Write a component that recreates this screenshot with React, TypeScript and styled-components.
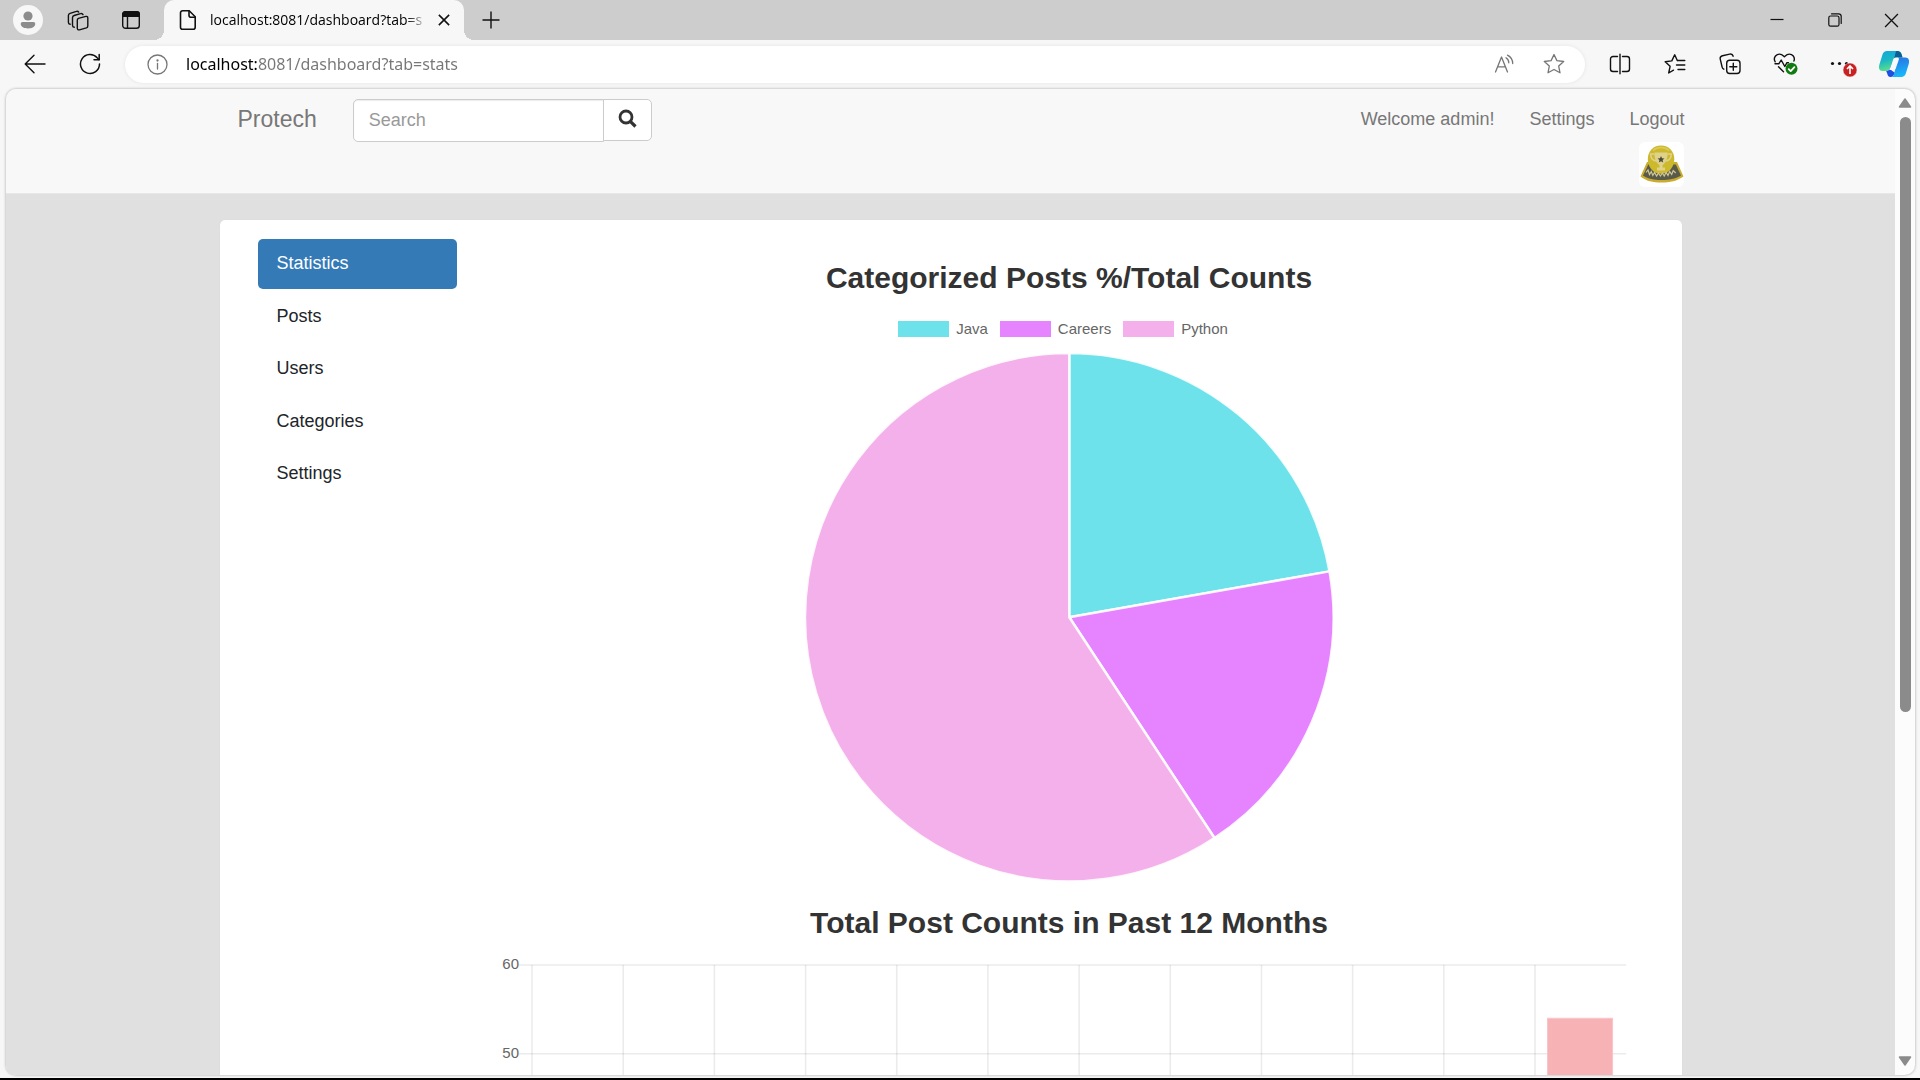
import React from "react";
import styled, { createGlobalStyle } from "styled-components";

const uiFont = `"Segoe UI", "Open Sans", "Noto Sans", sans-serif`;
const pageFont = `"Helvetica Neue", "Liberation Sans", Arial, sans-serif`;

const Global = createGlobalStyle`
  *, *::before, *::after { box-sizing: border-box; }
  body { margin: 0; background: #f7f7f7; }
  button { border: 0; background: none; padding: 0; font: inherit; color: inherit; cursor: pointer; }
  svg { display: block; }
`;

/* ---------- browser chrome ---------- */

const Window = styled.div`
  display: flex;
  flex-direction: column;
  height: 100vh;
  overflow: hidden;
  background: #f7f7f7;
  border-bottom: 2px solid #000;
  font-family: ${uiFont};
`;

const TabStrip = styled.header`
  display: flex;
  align-items: stretch;
  flex: none;
  height: 40px;
  padding-left: 5px;
  background: #cdcdcd;
  color: #111;
`;

const StripButton = styled.button<{ $w: number }>`
  display: flex;
  flex: none;
  align-items: center;
  justify-content: center;
  width: ${(p) => p.$w}px;
`;

const Tab = styled.div`
  position: relative;
  display: flex;
  align-items: center;
  width: 300px;
  margin-left: 7px;
  padding: 0 12px 0 14px;
  background: #f7f7f7;
  border-radius: 10px 10px 0 0;
  &::before,
  &::after {
    content: "";
    position: absolute;
    bottom: 0;
    width: 10px;
    height: 10px;
  }
  &::before {
    right: 100%;
    background: radial-gradient(circle at 0 0, transparent 10px, #f7f7f7 10px);
  }
  &::after {
    left: 100%;
    background: radial-gradient(circle at 100% 0, transparent 10px, #f7f7f7 10px);
  }
`;

const TabTitle = styled.span`
  flex: 1;
  min-width: 0;
  margin: 0 8px 0 12px;
  white-space: nowrap;
  font-size: 14px;
  line-height: 20px;
  color: #000;
  mask-image: linear-gradient(90deg, #000 90%, transparent);
`;

const WindowControls = styled.div`
  display: flex;
  margin-left: auto;
`;

const Toolbar = styled.div`
  display: flex;
  align-items: center;
  flex: none;
  height: 48px;
  padding-left: 7px;
  color: #111;
`;

const ToolButton = styled.button<{ $w?: number }>`
  display: flex;
  flex: none;
  align-items: center;
  justify-content: center;
  width: ${(p) => p.$w ?? 55}px;
  height: 36px;
`;

const AddressBar = styled.form`
  display: flex;
  align-items: center;
  flex: 1;
  height: 37px;
  margin: 0 7px 0 8px;
  padding: 0 6px 0 22px;
  background: #fff;
  border-radius: 19px;
  box-shadow: 0 0 4px rgba(0, 0, 0, 0.08);
  color: #767676;
`;

const AddressInput = styled.input`
  flex: 1;
  min-width: 0;
  margin-left: 18px;
  padding: 0;
  border: 0;
  outline: 0;
  font-family: "Segoe UI", "Noto Sans", "Open Sans", sans-serif;
  font-size: 16px;
  line-height: 24px;
  color: transparent;
  background: linear-gradient(90deg, #000 72px, #767676 72px);
  background-clip: text;
  -webkit-background-clip: text;
`;

/* ---------- page frame ---------- */

const Frame = styled.div`
  display: flex;
  flex: 1;
  min-height: 0;
  margin: 1px 5px 3px 6px;
  overflow: hidden;
  border-radius: 10px;
  background: #fcfcfc;
  box-shadow: 0 0 3px rgba(0, 0, 0, 0.35);
`;

const Page = styled.div`
  flex: 1;
  min-width: 0;
  overflow: hidden;
  background: #e0e0e0;
  font-family: ${pageFont};
  font-size: 18px;
  line-height: 25px;
  color: #333;
`;

const ScrollTrack = styled.div`
  display: flex;
  flex-direction: column;
  align-items: center;
  flex: none;
  width: 20px;
  padding: 9px 0;
`;

const ScrollSpace = styled.div`
  flex: 1;
  width: 11px;
  margin: 9px 0;
`;

const ScrollThumb = styled.div`
  height: 64%;
  border-radius: 6px;
  background: #8b8b8b;
`;

const Container = styled.div`
  display: flex;
  width: 100%;
  max-width: 1462px;
  margin: 0 auto;
`;

const Navbar = styled.nav`
  height: 105px;
  background: #f8f8f8;
  border-bottom: 1px solid #e7e7e7;
`;

const Brand = styled.a`
  padding: 18px 36px 0 18px;
  font-size: 23px;
  line-height: 25px;
  color: #777;
  text-decoration: none;
`;

const SearchForm = styled.form`
  display: flex;
  align-items: flex-start;
  padding-top: 10px;
`;

const SearchInput = styled.input`
  width: 251px;
  height: 43px;
  padding: 0 15px;
  border: 1px solid #ccc;
  border-radius: 5px 0 0 5px;
  background: #fff;
  box-shadow: inset 0 1px 1px rgba(0, 0, 0, 0.075);
  font-family: ${pageFont};
  font-size: 18px;
  color: #555;
  &::placeholder {
    color: #999;
  }
`;

const SearchButton = styled.button`
  display: flex;
  justify-content: center;
  width: 49px;
  height: 42px;
  margin-left: -1px;
  padding-top: 9px;
  border: 1px solid #ccc;
  border-radius: 0 5px 5px 0;
  background: #fff;
`;

const NavLinks = styled.ul`
  display: flex;
  gap: 35px;
  margin: 0 -3px 0 auto;
  padding: 18px 0 0;
  list-style: none;
`;

const NavLink = styled.a`
  display: block;
  color: #777;
  text-decoration: none;
`;

const Avatar = styled.a`
  display: block;
  width: 45px;
  height: 45px;
  margin: 10px 0 0 10px;
  overflow: hidden;
  border-radius: 6px;
  background: #fff;
`;

const Card = styled.div`
  display: flex;
  flex: 1;
  min-width: 0;
  margin-top: 26px;
  padding: 19px 38px;
  border-radius: 5px 5px 0 0;
  background: #fff;
  box-shadow: 0 0 1px rgba(0, 0, 0, 0.1);
`;

const SideNav = styled.nav`
  display: flex;
  flex: none;
  flex-direction: column;
  justify-content: space-between;
  width: 199px;
  height: 260px;
`;

const SideLink = styled.a<{ $active?: boolean }>`
  padding: 12px 19px 13px;
  border-radius: 5px;
  background: ${(p) => (p.$active ? "#337ab7" : "transparent")};
  color: ${(p) => (p.$active ? "#fff" : "#212529")};
  text-decoration: none;
`;

const Stats = styled.main`
  flex: 1;
  min-width: 0;
  margin-left: 38px;
`;

const ChartTitle = styled.h3`
  margin: 22px 0 14px;
  font-size: 30px;
  line-height: 33px;
  font-weight: 700;
  text-align: center;
`;

const Legend = styled.ul`
  display: flex;
  justify-content: center;
  margin: 0;
  padding: 12px 0 15px;
  list-style: none;
`;

const LegendItem = styled.li`
  display: flex;
  align-items: center;
  gap: 7px;
  margin-right: 12px;
  font-size: 15px;
  line-height: 18px;
  color: #666;
`;

const Swatch = styled.span<{ $color: string }>`
  width: 51px;
  height: 16px;
  background: ${(p) => p.$color};
`;

const PieSvg = styled.svg`
  width: 46%;
  height: auto;
  margin: 0 auto 24px;
`;

const BarSvg = styled.svg`
  width: 100%;
  height: auto;
  font-family: ${pageFont};
  font-size: 15px;
`;

/* ---------- data ---------- */

const categories = [
  { name: "Java", posts: 12, color: "#6ee2ea" },
  { name: "Careers", posts: 10, color: "#e683ff" },
  { name: "Python", posts: 32, color: "#f4b0ea" },
];

const monthly = [0, 0, 0, 0, 0, 0, 0, 0, 0, 0, 0, 54];

const sideItems = ["Statistics", "Posts", "Users", "Categories", "Settings"];

/* ---------- icons ---------- */

const line = {
  fill: "none",
  stroke: "currentColor",
  strokeWidth: 1.4,
  strokeLinecap: "round" as const,
  strokeLinejoin: "round" as const,
};

const ProfileIcon = () => (
  <svg width="30" height="30" viewBox="0 0 30 30">
    <circle cx="15" cy="15" r="15" fill="#f7f7f7" />
    <circle cx="15" cy="11" r="4.6" fill="#8c8c8c" />
    <path d="M9.5 17h11a1.8 1.8 0 0 1 1.8 1.8c0 3-3.2 4.7-7.3 4.7s-7.3-1.7-7.3-4.7A1.8 1.8 0 0 1 9.5 17z" fill="#8c8c8c" />
  </svg>
);

const WorkspacesIcon = () => (
  <svg width="22" height="22" viewBox="0 0 22 22" {...line}>
    <path d="M11.4 9.4 18.9 7.4a1.5 1.5 0 0 1 1.9 1.5v8a2 2 0 0 1-1.4 1.9l-7 2a1.6 1.6 0 0 1-2.1-1.5v-8a2 2 0 0 1 1.1-1.9z" />
    <path d="M7.3 18.2a2 2 0 0 1-1.8-2V8.8a2.4 2.4 0 0 1 1.7-2.3l6.3-1.9a2 2 0 0 1 2.5 1" />
    <path d="M3.2 15.3A2 2 0 0 1 1.4 13.300V6.600a2.400 2.400 0 0 1 1.700-2.300l6.300-1.900a2 2 0 0 1 2.300.7" />
  </svg>
);

const TabActionsIcon = () => (
  <svg width="20" height="20" viewBox="0 0 20 20" {...line}>
    <rect x="1.7" y="1.7" width="16.6" height="16.6" rx="2.8" />
    <path d="M1.7 6.200V4.200a2.500 2.500 0 0 1 2.500-2.500h11.600a2.500 2.500 0 0 1 2.500 2.500v2z" fill="currentColor" />
    <path d="M6.500 6.200v12" />
  </svg>
);

const FileIcon = () => (
  <svg width="20" height="22" viewBox="0 0 20 22" {...line} strokeWidth={1.6}>
    <path d="M4.500 1.800h6.700l6 6v10.400a2 2 0 0 1-2 2H4.500a2 2 0 0 1-2-2V3.800a2 2 0 0 1 2-2z" />
    <path d="M11 2v4.200a2 2 0 0 0 2 2h4.200" />
  </svg>
);

const CrossIcon = ({ size, weight }: { size: number; weight: number }) => (
  <svg width={size} height={size} viewBox="0 0 14 14" {...line} strokeWidth={weight} strokeLinecap="butt">
    <path d="M1 1l12 12M13 1 1 13" />
  </svg>
);

const PlusIcon = () => (
  <svg width="18" height="18" viewBox="0 0 18 18" {...line} strokeLinecap="butt">
    <path d="M9 .5v17M.5 9h17" />
  </svg>
);

const MinimizeIcon = () => (
  <svg width="14" height="14" viewBox="0 0 14 14" {...line} strokeWidth={1.2} strokeLinecap="butt">
    <path d="M.5 6.500h13" />
  </svg>
);

const RestoreIcon = () => (
  <svg width="14" height="14" viewBox="0 0 14 14" {...line} strokeWidth={1.2}>
    <rect x=".8" y="3" width="10.2" height="10.2" rx="1.8" />
    <path d="M3.500 .8h7a2.700 2.700 0 0 1 2.700 2.700v7" />
  </svg>
);

const BackIcon = () => (
  <svg width="22" height="22" viewBox="0 0 22 22" {...line}>
    <path d="M21 11H1.500M10 2.300 1.200 11l8.800 8.700" />
  </svg>
);

const RefreshIcon = () => (
  <svg width="22" height="22" viewBox="0 0 22 22" {...line} strokeWidth={1.5}>
    <path d="M20.500 11A9.500 9.500 0 1 1 18.200 4.800L20 6.700" />
    <path d="M20.200 1.500v5.200h-5.200" />
  </svg>
);

const InfoIcon = () => (
  <svg width="21" height="21" viewBox="0 0 21 21" {...line} strokeWidth={1.3}>
    <circle cx="10.5" cy="10.5" r="9.5" />
    <path d="M10.500 9.500v5.500" />
    <circle cx="10.5" cy="6.5" r=".5" fill="currentColor" />
  </svg>
);

const ReadAloudIcon = () => (
  <svg width="22" height="22" viewBox="0 0 22 22" {...line} strokeWidth={1.3}>
    <path d="M2.500 19 8.500 4l6 15M4.600 13.800h7.800" />
    <path d="M13 4.800a6 6 0 0 1 2.800 5M14.500 2.200a9.500 9.500 0 0 1 5.200 8.300" />
  </svg>
);

const StarIcon = () => (
  <svg width="22" height="22" viewBox="0 0 22 22" {...line} strokeWidth={1.3}>
    <path d="M11 1.500l2.900 6.100 6.800.9-5 4.600 1.300 6.700-6-3.300-6 3.300 1.300-6.700-5-4.600 6.800-.9z" />
  </svg>
);

const SplitIcon = () => (
  <svg width="22" height="22" viewBox="0 0 22 22" {...line}>
    <path d="M8.500 3.500H4a2.500 2.500 0 0 0-2.500 2.500v10A2.500 2.500 0 0 0 4 18.500h4.500M13.500 3.500H18a2.500 2.500 0 0 1 2.500 2.500v10a2.500 2.500 0 0 1-2.500 2.500h-4.500M11 1.300v19.400" />
  </svg>
);

const FavoritesIcon = () => (
  <svg width="22" height="22" viewBox="0 0 22 22" {...line}>
    <path d="M13.300 7.500 10.700 1.800 7.800 7.900l-6.600.9 4.900 4.500-1.400 6.700 4.800-2.800" />
    <path d="M13.500 7.500h7.300M12.500 12h8.300M14 16.500h6.800" />
  </svg>
);

const CollectionsIcon = () => (
  <svg width="22" height="22" viewBox="0 0 22 22" {...line}>
    <rect x="7.7" y="7.2" width="13.3" height="13.3" rx="3" />
    <path d="M14.300 10.300v7M10.800 13.800h7" />
    <path d="M4.800 16.200a3 3 0 0 1-1.700-2.200L1.300 6.300a3 3 0 0 1 2.200-3.600l7.200-1.600a3 3 0 0 1 3.500 2.100" />
  </svg>
);

const EssentialsIcon = () => (
  <svg width="26" height="24" viewBox="0 0 26 24" {...line}>
    <path d="M3.200 9.800A5 5 0 0 1 3.500 4c2.200-2.500 5.700-2.400 8-.1l.9.900.9-.9c2.200-2.300 5.900-2.400 8 .1a5 5 0 0 1 .6 5" />
    <path d="M3 11.800h3.800L9.200 8l3.600 6.500 2-3.700h1.700M6.500 14.800l5 5" />
    <circle cx="19.5" cy="16.8" r="6" fill="#107c10" stroke="none" />
    <path d="M16.700 17.100l2 2 3.700-4" stroke="#fff" strokeWidth="1.8" />
  </svg>
);

const MoreIcon = () => (
  <svg width="34" height="26" viewBox="0 0 34 26">
    <g fill="#111">
      <circle cx="9.5" cy="12.5" r="1.6" />
      <circle cx="16.5" cy="12.5" r="1.6" />
      <circle cx="23.5" cy="12.5" r="1.6" />
    </g>
    <circle cx="27" cy="19" r="7" fill="#c92121" stroke="#f7f7f7" strokeWidth=".5" />
    <path d="M27 23v-7.500M24 18l3-3 3 3" fill="none" stroke="#fff" strokeWidth="1.6" />
  </svg>
);

const CopilotIcon = () => (
  <svg width="32" height="28" viewBox="0 0 32 28">
    <defs>
      <linearGradient id="cpA" x1="0" y1="0" x2=".3" y2="1">
        <stop offset="0" stopColor="#12a5e0" />
        <stop offset=".5" stopColor="#1bb7c4" />
        <stop offset="1" stopColor="#5ce08a" />
      </linearGradient>
      <linearGradient id="cpB" x1="0" y1="0" x2=".2" y2="1">
        <stop offset="0" stopColor="#2a6fe0" />
        <stop offset="1" stopColor="#17b7fb" />
      </linearGradient>
    </defs>
    <path d="M9 1h11a4 4 0 0 1 3.500 3l1 3.500h-5L12 18.500A4 4 0 0 1 8.500 21H4.500C1 21 .5 18 1.400 14.500L4.500 4.500A5 5 0 0 1 9 1z" fill="url(#cpA)" />
    <path d="M18 1h2a4 4 0 0 1 3.500 3l1 3.500h-5c-2.200 0-3.300 1.300-4 3.500z" fill="#0b5f93" />
    <path d="M19.500 7.500h7.800c3.400 0 4.400 3 3.500 6.300l-3 9.700A5 5 0 0 1 23.200 27H12.500a4 4 0 0 0 3.700-3z" fill="url(#cpB)" />
    <path d="M8.200 21c1.900 0 3.300-.8 3.900-2.700l2.400-7.500-1 9.800 3.200 2c-.7 3-2 4.400-4.200 4.400-2.300 0-2.700-1.500-3.200-3.300z" fill="#1d50e2" />
    <path d="M19.500 7.500h-1.600c-1.700 0-2.400 1-3 2.800L12 18.500l-.7 1.500h4.200c1.400 0 2-.8 2.500-2.300l2.800-8c.4-1.200 0-2.200-1.300-2.200z" fill="#f7f9fb" />
  </svg>
);

const SearchIcon = () => (
  <svg width="19" height="19" viewBox="0 0 19 19" fill="none" stroke="#333">
    <circle cx="8" cy="8" r="6" strokeWidth="2.8" />
    <path d="M12.300 12.300l5.200 5.200" strokeWidth="3.2" />
  </svg>
);

const AwardPicture = () => (
  <svg width="45" height="45" viewBox="0 0 45 45">
    <path d="M8 20 1.500 34.500C7 39 14 40.500 22.500 40.500S38 39 44.500 34.500L38 20z" fill="#c9ab2d" />
    <path d="M9.300 22.500 4 33.500C9.500 37 15 38 22.500 38S36 37 42 33.500L36.800 22.500z" fill="#5a5a4b" />
    <path d="M22 3.500c-8 0-13.200 6-13.200 13.500 0 6 3 10.500 6.500 13 4 2.300 9.500 2.300 13.500 0 3.500-2.500 6.500-7 6.500-13C35.300 9.500 30 3.500 22 3.500z" fill="#cdb92c" />
    <path d="M14 8.500c4-4 12-4 16 0" stroke="#dccb5c" strokeWidth="1.5" fill="none" />
    <path d="M15.500 10.500h13c.3 6-1.500 10.500-5 12.500v2.500h2.500v3h-8v-3h2.500V23c-3.500-2-5.300-6.500-5-12.500z" fill="#dfd28c" />
    <path d="M15.500 12h-3.800c0 4.500 2 6.500 5.300 7M28.500 12h3.800c0 4.500-2 6.500-5.300 7" stroke="#dfd28c" strokeWidth="1.5" fill="none" />
    <path d="M22 14l1 2.300 2.500.2-1.900 1.600.6 2.400-2.200-1.300-2.200 1.300.6-2.400-1.900-1.600 2.500-.2z" fill="#4b4a35" />
    <path d="M7 30.500l2-2.500 1.500 4.500 1.800-3 1.500 4 1.800-3 2 3.500 1.800-3 2 3 2-3 1.800 3 2-3.500 1.800 3 1.700-4 2 3 1.500-4 2.500 2.500" stroke="#cfc696" strokeWidth="1.2" fill="none" />
  </svg>
);

const Triangle = ({ down }: { down?: boolean }) => (
  <svg width="14" height="10" viewBox="0 0 14 10">
    <path
      d={down ? "M1.500 1h11L7 9z" : "M1.500 9h11L7 1z"}
      fill="#8b8b8b"
      stroke="#8b8b8b"
      strokeWidth="1.5"
      strokeLinejoin="round"
    />
  </svg>
);

/* ---------- charts ---------- */

const R = 264;

function PieChart() {
  const total = categories.reduce((sum, c) => sum + c.posts, 0);
  let start = 0;
  return (
    <PieSvg viewBox="0 0 528 528" role="img" aria-label="Categorized posts">
      {categories.map((c) => {
        const end = start + (c.posts / total) * Math.PI * 2;
        const x1 = R + R * Math.sin(start);
        const y1 = R - R * Math.cos(start);
        const x2 = R + R * Math.sin(end);
        const y2 = R - R * Math.cos(end);
        const large = end - start > Math.PI ? 1 : 0;
        start = end;
        return (
          <path
            key={c.name}
            d={`M${R} ${R}L${x1} ${y1}A${R} ${R} 0 ${large} 1 ${x2} ${y2}Z`}
            fill={c.color}
            stroke="#fff"
            strokeWidth="2.5"
            strokeOpacity=".9"
            strokeLinejoin="round"
          />
        );
      })}
    </PieSvg>
  );
}

function BarChart() {
  const left = 37;
  const top = 12;
  const colWidth = 91.1;
  const unit = 8.87;
  const height = 560;
  const right = left + colWidth * monthly.length;
  const base = top + unit * 60;
  return (
    <BarSvg viewBox={`0 0 1148 ${height}`} role="img" aria-label="Total post counts">
      <g stroke="#000" strokeOpacity=".08" strokeWidth="1.6">
        {monthly.map((_, i) => (
          <path key={i} d={`M${left + i * colWidth} ${top}V${height}`} />
        ))}
        {[60, 50].map((t) => (
          <path key={t} d={`M24 ${base - t * unit}H${right}`} />
        ))}
      </g>
      {[60, 50].map((t) => (
        <text key={t} x="24" y={base - t * unit + 4} textAnchor="end" fill="#666">
          {t}
        </text>
      ))}
      {monthly.map((count, i) =>
        count ? (
          <rect
            key={i}
            x={left + i * colWidth + 12.5}
            y={base - count * unit}
            width="65"
            height={count * unit}
            fill="#f7b2b6"
            stroke="#fac3c8"
            strokeWidth="1"
          />
        ) : null
      )}
    </BarSvg>
  );
}

/* ---------- app ---------- */

export default function App() {
  return (
    <Window>
      <Global />
      <TabStrip>
        <StripButton $w={46} aria-label="Profile"><ProfileIcon /></StripButton>
        <StripButton $w={53} aria-label="Workspaces"><WorkspacesIcon /></StripButton>
        <StripButton $w={53} aria-label="Tab actions"><TabActionsIcon /></StripButton>
        <Tab>
          <FileIcon />
          <TabTitle>localhost:8081/dashboard?tab=s</TabTitle>
          <StripButton $w={16} aria-label="Close tab"><CrossIcon size={12} weight={1.8} /></StripButton>
        </Tab>
        <StripButton $w={54} aria-label="New tab"><PlusIcon /></StripButton>
        <WindowControls>
          <StripButton $w={58} aria-label="Minimize"><MinimizeIcon /></StripButton>
          <StripButton $w={57} aria-label="Restore"><RestoreIcon /></StripButton>
          <StripButton $w={57} aria-label="Close window"><CrossIcon size={15} weight={1.2} /></StripButton>
        </WindowControls>
      </TabStrip>
      <Toolbar>
        <ToolButton aria-label="Back"><BackIcon /></ToolButton>
        <ToolButton aria-label="Refresh"><RefreshIcon /></ToolButton>
        <AddressBar onSubmit={(e) => e.preventDefault()}>
          <InfoIcon />
          <AddressInput aria-label="Address" defaultValue="localhost:8081/dashboard?tab=stats" />
          <ToolButton type="button" $w={50} aria-label="Read aloud"><ReadAloudIcon /></ToolButton>
          <ToolButton type="button" $w={50} aria-label="Add to favorites"><StarIcon /></ToolButton>
        </AddressBar>
        <ToolButton aria-label="Split screen"><SplitIcon /></ToolButton>
        <ToolButton aria-label="Favorites"><FavoritesIcon /></ToolButton>
        <ToolButton aria-label="Collections"><CollectionsIcon /></ToolButton>
        <ToolButton aria-label="Browser essentials"><EssentialsIcon /></ToolButton>
        <ToolButton aria-label="More"><MoreIcon /></ToolButton>
        <ToolButton $w={53} aria-label="Copilot"><CopilotIcon /></ToolButton>
      </Toolbar>
      <Frame>
        <Page>
          <Navbar>
            <Container>
              <Brand href="#">Protech</Brand>
              <SearchForm onSubmit={(e) => e.preventDefault()}>
                <SearchInput type="text" placeholder="Search" aria-label="Search" />
                <SearchButton aria-label="Submit search"><SearchIcon /></SearchButton>
              </SearchForm>
              <NavLinks>
                <li><NavLink href="#">Welcome admin!</NavLink></li>
                <li><NavLink href="#">Settings</NavLink></li>
                <li>
                  <NavLink href="#">Logout</NavLink>
                  <Avatar href="#" aria-label="Profile picture"><AwardPicture /></Avatar>
                </li>
              </NavLinks>
            </Container>
          </Navbar>
          <Container>
            <Card>
              <SideNav>
                {sideItems.map((item, i) => (
                  <SideLink key={item} href="#" $active={i === 0}>{item}</SideLink>
                ))}
              </SideNav>
              <Stats>
                <ChartTitle>Categorized Posts %/Total Counts</ChartTitle>
                <Legend>
                  {categories.map((c) => (
                    <LegendItem key={c.name}>
                      <Swatch $color={c.color} />
                      {c.name}
                    </LegendItem>
                  ))}
                </Legend>
                <PieChart />
                <ChartTitle>Total Post Counts in Past 12 Months</ChartTitle>
                <BarChart />
              </Stats>
            </Card>
          </Container>
        </Page>
        <ScrollTrack>
          <Triangle />
          <ScrollSpace><ScrollThumb /></ScrollSpace>
          <Triangle down />
        </ScrollTrack>
      </Frame>
    </Window>
  );
}
